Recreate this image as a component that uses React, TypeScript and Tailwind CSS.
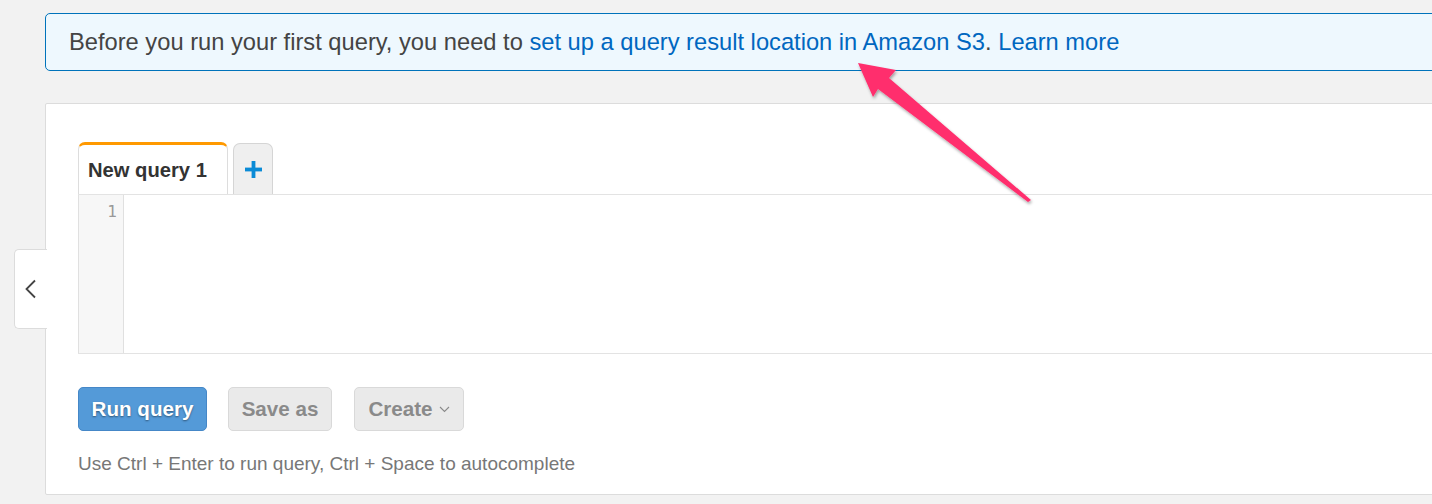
import React from "react";

export default function App() {
  return (
    <div
      className="relative w-full h-[504px] overflow-hidden bg-[#f2f2f2]"
      style={{ fontFamily: '"Liberation Sans", Arial, sans-serif' }}
    >
      <div className="pl-[45px] pt-[13px]">
        <div className="flex items-center h-[58px] -mr-4 pl-[23px] pt-[2px] border border-[#0073bb] rounded-[5px] bg-[#eef8fe] text-[23.7px] text-[#444444]">
          <span>
            Before you run your first query, you need to{" "}
            <span className="text-[#0067c0]">set up a query result location in Amazon S3</span>.{" "}
            <span className="text-[#0067c0]">Learn more</span>
          </span>
        </div>

        <div className="mt-[32px] h-[392px] -mr-4 bg-white border border-[#dcdcdc] rounded-l-[2px] pl-[32px] pt-[38px]">
          <div className="flex items-end gap-[5px]">
            <div className="w-[150px] h-[52px] border-t-[3px] border-t-[#ff9900] border-x border-x-[#dddddd] rounded-t-[7px] bg-white flex items-center pl-[9px] pt-[2px] text-[20.2px] font-bold text-[#333333]">
              New query 1
            </div>
            <div className="w-[40px] h-[51px] border border-b-0 border-[#d5d5d5] rounded-t-[7px] bg-[#efefef] flex items-center justify-center">
              <svg width="17" height="17" viewBox="0 0 17 17">
                <rect x="6.6" y="0" width="3.8" height="17" fill="#0a8bd6" />
                <rect x="0" y="6.6" width="17" height="3.8" fill="#0a8bd6" />
              </svg>
            </div>
          </div>
          <div className="flex h-[160px] border-y border-[#e3e3e3]">
            <div className="w-[46px] bg-[#f7f7f7] border-x border-[#e0e0e0] text-right pr-[6px] pt-[5px] text-[16px] text-[#999999]" style={{ fontFamily: '"DejaVu Sans Mono", monospace' }}>
              1
            </div>
            <div className="flex-1" />
          </div>
          <div className="flex items-center mt-[33px] gap-[21px]">
            <button className="w-[129px] h-[44px] rounded-[5px] bg-[#549ad8] border border-[#4587c7] text-white font-bold text-[20.6px] [text-shadow:0_1px_2px_rgba(0,0,0,0.45)]">
              Run query
            </button>
            <button className="w-[104px] h-[44px] rounded-[5px] bg-[#eaeaea] border border-[#d9d9d9] text-[#8a8a8a] font-bold text-[20.6px]">
              Save as
            </button>
            <button className="ml-px w-[110px] h-[44px] rounded-[5px] bg-[#eaeaea] border border-[#d9d9d9] text-[#8a8a8a] font-bold text-[20.6px] flex items-center justify-center gap-[6px]">
              Create
              <svg width="11" height="7" viewBox="0 0 11 7">
                <path d="M1 1 L5.5 5.5 L10 1" fill="none" stroke="#8a8a8a" strokeWidth="1.1" />
              </svg>
            </button>
          </div>
          <div className="mt-[19px] text-[19px] text-[#777777]">
            Use Ctrl + Enter to run query, Ctrl + Space to autocomplete
          </div>
        </div>
      </div>

      <div className="absolute left-[14px] top-[249px] w-[33px] h-[80px] bg-white border border-r-0 border-[#dcdcdc] rounded-l-[5px] flex items-center justify-center">
        <svg width="14" height="20" viewBox="0 0 14 20">
          <path d="M11 1.5 L2.5 10 L11 18.5" fill="none" stroke="#444444" strokeWidth="1.8" />
        </svg>
      </div>

      <svg className="absolute inset-0 pointer-events-none" width="1432" height="504">
        <defs>
          <filter id="sh" x="-20%" y="-20%" width="140%" height="140%">
            <feDropShadow dx="1" dy="2" stdDeviation="1.5" floodColor="#000" floodOpacity="0.35" />
          </filter>
        </defs>
        <polygon
          points="858,63 896,70 889,78 1031,200 1028,202 878,89 873,97"
          fill="#ff2e6d"
          filter="url(#sh)"
        />
      </svg>
    </div>
  );
}
